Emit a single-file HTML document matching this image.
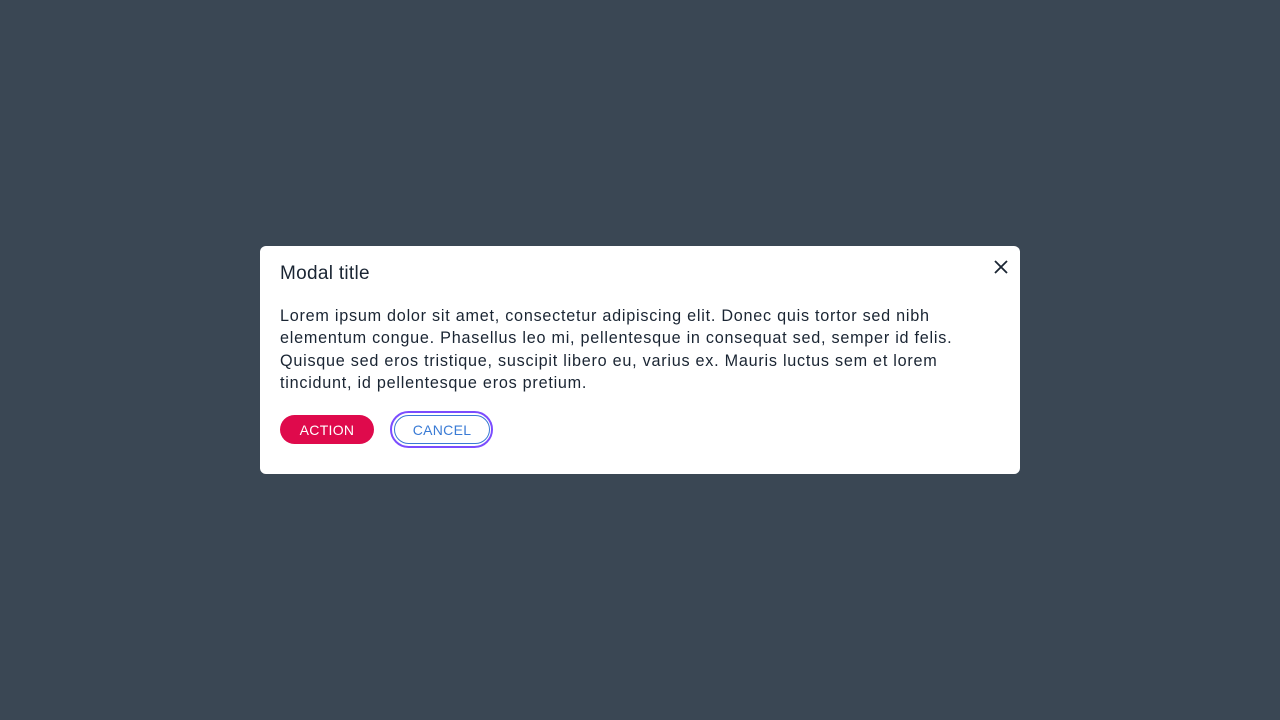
<!DOCTYPE html>
<html><head><style>
html,body{margin:0;padding:0;width:1280px;height:720px;background:#3a4754;font-family:"Liberation Sans",sans-serif;overflow:hidden}
.modal{position:absolute;left:260px;top:246px;width:760px;height:228px;background:#fff;border-radius:6px}
.title{position:absolute;left:20px;top:17px;font-size:19px;color:#1a2533;font-weight:300;letter-spacing:0.3px}
.close{position:absolute;left:733px;top:13px}
.body{position:absolute;left:20px;top:59px;font-size:16.2px;line-height:22.4px;color:#1a2533;white-space:nowrap;letter-spacing:0.75px}
.btn{position:absolute;top:169px;height:29px;border-radius:15px;font-size:14px;line-height:30px;text-align:center;letter-spacing:0.3px;box-sizing:border-box}
.act{left:20px;width:94px;background:#df0a4c;color:#fff}
.ring{position:absolute;left:130px;top:165px;width:103px;height:37px;border:2px solid #7b4dff;border-radius:19px;box-sizing:border-box}
.can{left:134px;width:96px;border:1px solid #3a7bd5;color:#3a7bd5;line-height:28px}
</style></head><body>
<div class="modal">
<div class="title">Modal title</div>
<svg class="close" width="16" height="16" viewBox="0 0 16 16"><path d="M2 2L14 14M14 2L2 14" stroke="#1a2533" stroke-width="1.8"/></svg>
<div class="body">Lorem ipsum dolor sit amet, consectetur adipiscing elit. Donec quis tortor sed nibh<br>elementum congue. Phasellus leo mi, pellentesque in consequat sed, semper id felis.<br>Quisque sed eros tristique, suscipit libero eu, varius ex. Mauris luctus sem et lorem<br>tincidunt, id pellentesque eros pretium.</div>
<div class="btn act">ACTION</div>
<div class="ring"></div>
<div class="btn can">CANCEL</div>
</div>
</body></html>
